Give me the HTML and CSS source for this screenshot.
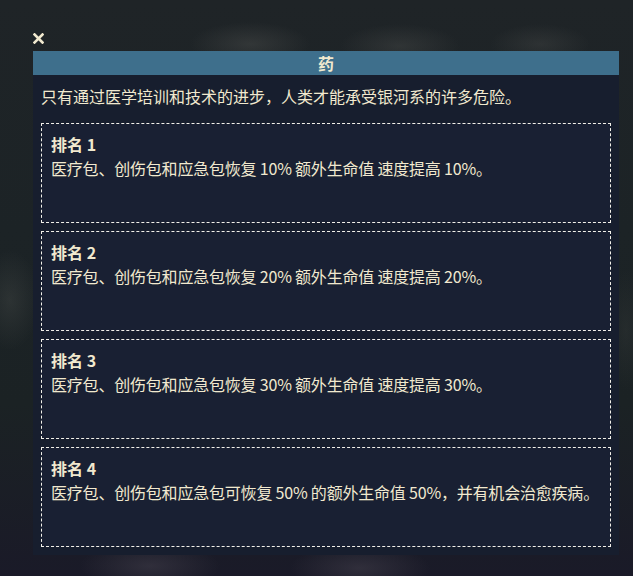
FILE: index.html
```html
<!DOCTYPE html>
<html lang="zh">
<head>
  <meta charset="UTF-8">
  <meta name="viewport" content="width=device-width, initial-scale=1.0">
  <title>药</title>
  <link rel="stylesheet" href="styles.css">
</head>
<body>
  <main class="modal">
    <button class="close" type="button" aria-label="关闭">
      <svg width="11" height="11" viewBox="0 0 11 11" xmlns="http://www.w3.org/2000/svg">
        <path d="M1.5 1.5 L9.5 9.5 M9.5 1.5 L1.5 9.5" />
      </svg>
    </button>

    <section class="panel">
      <h1 class="panel-title">药</h1>
      <p class="panel-desc">只有通过医学培训和技术的进步，人类才能承受银河系的许多危险。</p>

      <ul class="ranks">
        <li class="rank">
          <h2>排名 1</h2>
          <p>医疗包、创伤包和应急包恢复 10% 额外生命值 速度提高 10%。</p>
        </li>
        <li class="rank">
          <h2>排名 2</h2>
          <p>医疗包、创伤包和应急包恢复 20% 额外生命值 速度提高 20%。</p>
        </li>
        <li class="rank">
          <h2>排名 3</h2>
          <p>医疗包、创伤包和应急包恢复 30% 额外生命值 速度提高 30%。</p>
        </li>
        <li class="rank">
          <h2>排名 4</h2>
          <p>医疗包、创伤包和应急包可恢复 50% 的额外生命值 50%，并有机会治愈疾病。</p>
        </li>
      </ul>
    </section>
  </main>
</body>
</html>
```

FILE: styles.css
```css
:root {
  --text-color: #f1e9cf;
  --panel-color: #171e2e;
  --card-color: #192033;
  --header-color: #3e6f8c;
}
body {
  margin: 0;
  min-height: 576px;
  font-family: "Noto Sans CJK SC", "Noto Sans", sans-serif;
  color: var(--text-color);
  background-color: #1b2024;
  background-image:
    radial-gradient(ellipse 60px 22px at 250px 44px, rgba(80, 82, 80, 0.4), transparent),
    radial-gradient(ellipse 60px 22px at 400px 46px, rgba(80, 82, 80, 0.35), transparent),
    radial-gradient(ellipse 50px 20px at 540px 44px, rgba(80, 82, 80, 0.3), transparent),
    radial-gradient(ellipse 30px 50px at 10px 300px, rgba(70, 74, 72, 0.4), transparent),
    radial-gradient(ellipse 20px 60px at 626px 330px, rgba(60, 64, 62, 0.3), transparent),
    radial-gradient(ellipse 70px 24px at 150px 566px, rgba(70, 66, 78, 0.5), transparent),
    radial-gradient(ellipse 70px 24px at 360px 568px, rgba(70, 66, 78, 0.5), transparent),
    linear-gradient(180deg, #1f2427 0%, #1c2326 40%, #1b2224 70%, #1a1a28 100%);
}

.modal {
  display: flex;
  flex-direction: column;
  align-items: flex-start;
  padding: 33px 14px 22px 33px;
}

/* 닫기 버튼 */
.close {
  display: block;
  padding: 0;
  margin: 0 0 7px;
  border: 0;
  background: none;
  cursor: pointer;
}
.close svg {
  display: block;
  stroke: var(--text-color);
  stroke-width: 2.6;
  stroke-linecap: square;
}

/* 패널 */
.panel {
  align-self: stretch;
  background: var(--panel-color);
  padding: 0 8px 8px;
}
.panel-title {
  margin: 0 -8px;
  height: 24px;
  line-height: 24px;
  background: var(--header-color);
  text-align: center;
  font-size: 16px;
  font-weight: bold;
}
.panel-desc {
  margin: 0;
  padding: 10px 0 0;
  font-size: 16px;
  line-height: 22px;
}

/* 랭크 카드 */
.ranks {
  list-style: none;
  margin: 16px 0 0;
  padding: 0;
  display: flex;
  flex-direction: column;
  gap: 8px;
}
.rank {
  box-sizing: border-box;
  height: 100px;
  padding: 8px 9px;
  border: 1px dashed #f2f0ea;
  background: var(--card-color);
}
.rank h2 {
  margin: 0;
  font-size: 16px;
  font-weight: bold;
  line-height: 24px;
}
.rank p {
  margin: 0;
  font-size: 16px;
  line-height: 24px;
  letter-spacing: -0.2px;
  white-space: nowrap;
}
```
